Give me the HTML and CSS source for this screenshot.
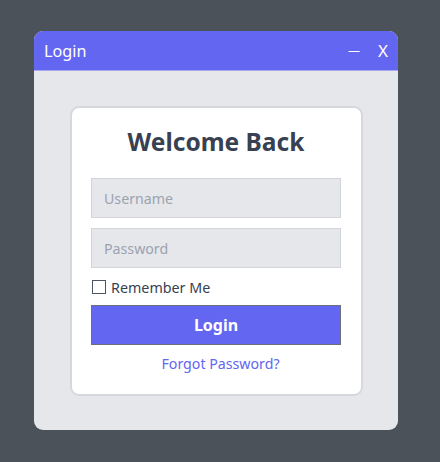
FILE: index.html
```html
<!DOCTYPE html>
<html>
<head>
<meta charset="utf-8">
<link rel="stylesheet" href="styles.css">
</head>
<body>
<div class="window">
  <div class="titlebar">
    <span class="title">Login</span>
    <div class="controls">
      <span class="ctl min">—</span>
      <span class="ctl close">X</span>
    </div>
  </div>
  <div class="body">
    <div class="card">
      <h1 class="heading">Welcome Back</h1>
      <input class="field" type="text" placeholder="Username">
      <input class="field" type="password" placeholder="Password">
      <label class="remember"><span class="box"></span>Remember Me</label>
      <button class="btn">Login</button>
      <a class="forgot">Forgot Password?</a>
    </div>
  </div>
</div>
</body>
</html>
```
FILE: styles.css
```css
* { box-sizing: border-box; }
html, body { margin: 0; padding: 0; }
body {
  background: #4b5259;
  width: 440px;
  height: 462px;
  font-family: "Noto Sans", "Open Sans", sans-serif;
  padding: 31px 0 0 34px;
}
.window {
  width: 364px;
  border-radius: 9px;
  overflow: hidden;
  background: #e5e7eb;
}
.titlebar {
  height: 40px;
  background: #6366f1;
  border-bottom: 1px solid #a5a8ee;
  display: flex;
  align-items: center;
  justify-content: space-between;
  padding: 0 10px 0 10px;
  color: #fff;
}
.title { font-size: 16.2px; }
.controls { display: flex; align-items: center; gap: 18px; }
.ctl { font-size: 17px; line-height: 1; }
.min { font-size: 12px; }
.body { padding: 35px 35px 34px 36px; }
.card {
  background: #fff;
  border: 2px solid #d6d8dd;
  border-radius: 9px;
  padding: 19px 20px 20px 19px;
  display: flex;
  flex-direction: column;
}
.heading {
  margin: 0 0 21px 0;
  text-align: center;
  font-size: 24.5px;
  line-height: 30px;
  font-weight: 700;
  color: #374151;
}
.field {
  height: 40px;
  width: 250px;
  border: 1px solid #d1d5db;
  background: #e5e7eb;
  font-family: inherit;
  font-size: 14.2px;
  padding: 0 12px;
  margin: 0 0 10px 0;
  outline: none;
}
.field::placeholder { color: #9ca3af; }
.remember {
  display: flex;
  align-items: center;
  font-size: 14.3px;
  color: #374151;
  height: 18px;
  margin: 0 0 9px 0;
}
.box {
  width: 14px;
  height: 14px;
  border: 1px solid #4b5563;
  margin: 0 5px 0 1px;
  background: #fff;
}
.btn {
  height: 40px;
  width: 250px;
  background: #6366f1;
  border: 1px solid #6b6f7c;
  color: #fff;
  font-family: inherit;
  font-weight: 700;
  font-size: 16px;
  margin: 0 0 9px 0;
}
.forgot {
  text-align: center;
  color: #6366f1;
  font-size: 14.2px;
  line-height: 20px;
  padding-left: 9px;
}
```
